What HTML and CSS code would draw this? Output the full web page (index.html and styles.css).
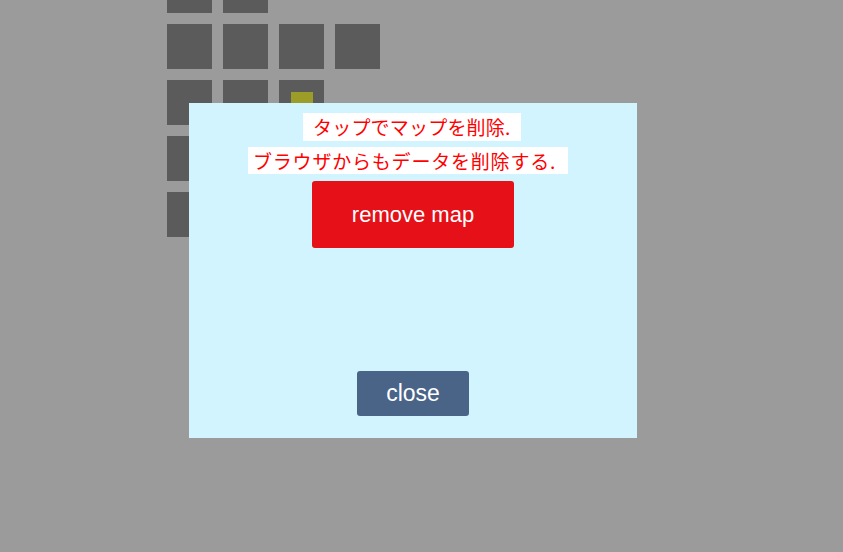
FILE: index.html
```html
<!DOCTYPE html>
<html lang="ja">
<head>
<meta charset="utf-8">
<link rel="stylesheet" href="styles.css">
</head>
<body>
<div class="board">
  <div class="tile"></div><div class="tile"></div><div class="tile empty"></div><div class="tile empty"></div>
  <div class="tile"></div><div class="tile"></div><div class="tile"></div><div class="tile"></div>
  <div class="tile"></div><div class="tile"></div><div class="tile"><div class="marker"></div></div><div class="tile empty"></div>
  <div class="tile"></div><div class="tile"></div><div class="tile empty"></div><div class="tile empty"></div>
  <div class="tile"></div><div class="tile"></div><div class="tile empty"></div><div class="tile empty"></div>
</div>
<div class="dialog">
  <div class="label first">タップでマップを削除.</div>
  <div class="label second">ブラウザからもデータを削除する.</div>
  <button class="btn remove">remove map</button>
  <button class="btn close">close</button>
</div>
</body>
</html>
```

FILE: styles.css
```css
html, body {
  margin: 0;
  padding: 0;
  width: 843px;
  height: 552px;
  overflow: hidden;
  background: #9b9b9b;
  font-family: "Liberation Sans", Arial, sans-serif;
}
.board {
  display: grid;
  grid-template-columns: repeat(4, 45px);
  grid-auto-rows: 45px;
  gap: 11px;
  margin: -32px 0 0 167px;
}
.tile {
  background: #5b5b5b;
  display: flex;
  align-items: center;
  justify-content: center;
}
.tile.empty {
  visibility: hidden;
}
.marker {
  width: 22px;
  height: 22px;
  background: #9c9c28;
}
.dialog {
  position: absolute;
  left: 189px;
  top: 103px;
  width: 448px;
  height: 335px;
  background: #d2f4fe;
  display: flex;
  flex-direction: column;
  align-items: center;
  box-sizing: border-box;
  padding: 10px 0 22px;
}
.label {
  background: #ffffff;
  color: #ff0000;
  font-family: "Noto Sans CJK JP", sans-serif;
  font-size: 19px;
  line-height: 27px;
  height: 27px;
  white-space: nowrap;
  box-sizing: border-box;
  letter-spacing: 0.2px;
}
.label.first {
  width: 218px;
  padding-left: 10px;
  height: 28px;
  line-height: 28px;
  margin-left: -2px;
}
.label.second {
  width: 320px;
  margin-top: 6px;
  padding-left: 5px;
  margin-left: -10px;
  letter-spacing: 0.8px;
}
.btn {
  border: none;
  color: #ffffff;
  font-family: "Liberation Sans", Arial, sans-serif;
  border-radius: 3px;
  padding: 0;
}
.remove {
  margin-top: 7px;
  width: 202px;
  height: 67px;
  background: #e51018;
  font-size: 22px;
}
.close {
  margin-top: auto;
  width: 112px;
  height: 45px;
  background: #4a6488;
  font-size: 23px;
}
```
